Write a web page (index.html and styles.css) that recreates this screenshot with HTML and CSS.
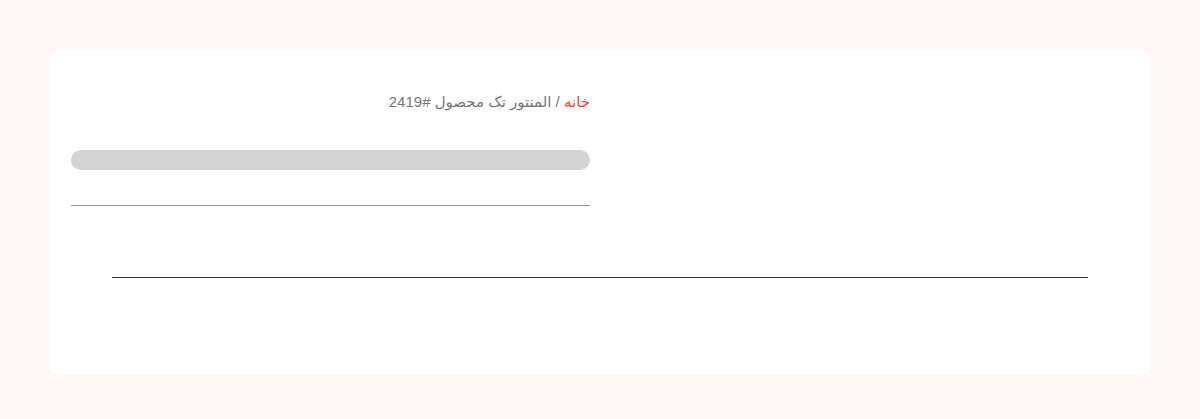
FILE: index.html
```html
<!DOCTYPE html>
<html lang="fa" dir="rtl">

<head>
    <meta charset="UTF-8">
    <meta name="viewport" content="width=device-width, initial-scale=1.0">
    <title>المنتور تک محصول #2419</title>
    <link rel="stylesheet" href="styles.css">
</head>

<body>
    <div class="card">
        <div class="top">
            <div class="gallery"></div>
            <div class="summary">
                <nav class="breadcrumb">
                    <a href="#">خانه</a> / المنتور تک محصول #2419
                </nav>
                <div class="skeleton"></div>
                <hr class="sep">
            </div>
        </div>
        <hr class="divider">
    </div>
</body>

</html>
```

FILE: styles.css
```css
body {
    font-family: "Liberation Sans", "DejaVu Sans", sans-serif;
    margin: 0;
    padding: 50px;
    background-color: #fff8f7;
}

.card {
    background: #fff;
    border-radius: 10px;
    height: 325px;
    padding: 0 21px;
    box-sizing: border-box;
}

.top {
    display: grid;
    grid-template-columns: 1fr 519px;
    padding-top: 43px;
}

.breadcrumb {
    font-size: 15px;
    color: #777;
    line-height: 18px;
}

.breadcrumb a {
    color: #f44336;
    text-decoration: none;
}

.skeleton {
    height: 20px;
    margin-top: 39px;
    background: #d4d4d4;
    border-radius: 10px;
}

.sep {
    margin: 35px 0 0;
    border: none;
    border-top: 1px solid #999;
}

.divider {
    margin: 71px 41px 0;
    border: none;
    border-top: 1px solid #333;
}
```
